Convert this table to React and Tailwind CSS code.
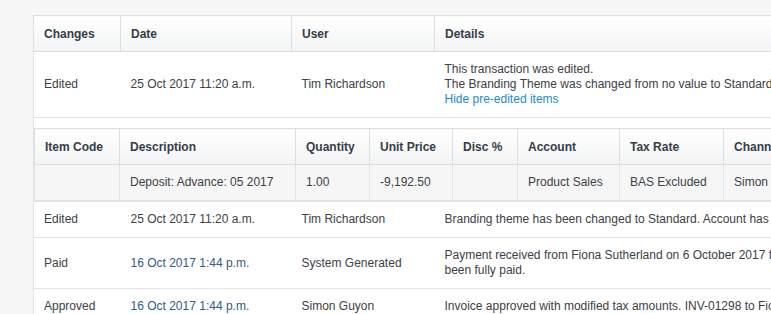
import React from "react";

const th =
  "border border-[#dedede] px-[10px] pt-[11px] pb-[9px] text-left font-bold text-[#343e48] leading-[15px] bg-gradient-to-b from-white to-[#f3f4f5]";
const td = "border border-[#e2e2e2] px-[10px] py-[10px] leading-[15px] align-middle";
const itd = "border border-[#e4e4e4] px-[10px] py-[10px] leading-[15px] align-middle bg-[#f6f6f6]";

export default function App() {
  return (
    <div className="w-[771px] h-[314px] overflow-hidden bg-[#f6f6f6] pl-[33px] pt-[15px] font-['Liberation_Sans',Arial,sans-serif] text-[12px] text-[#3b4147]">
      <table className="table-fixed border-collapse bg-white w-[1150px] border border-[#dcdcdc]">
        <colgroup>
          <col className="w-[87px]" />
          <col className="w-[171px]" />
          <col className="w-[143px]" />
          <col />
        </colgroup>
        <thead>
          <tr>
            <th className={th}>Changes</th>
            <th className={th}>Date</th>
            <th className={th}>User</th>
            <th className={th}>Details</th>
          </tr>
        </thead>
        <tbody>
          <tr>
            <td className={td + " border-r-0"}>Edited</td>
            <td className={td + " border-x-0"}>25 Oct 2017 11:20 a.m.</td>
            <td className={td + " border-x-0"}>Tim Richardson</td>
            <td className={td + " border-l-0 whitespace-nowrap"}>
              <div>This transaction was edited.</div>
              <div>The Branding Theme was changed from no value to Standard.</div>
              <div>
                <a className="text-[#1a8dd0]">Hide pre-edited items</a>
              </div>
            </td>
          </tr>
          <tr>
            <td colSpan={4} className="border border-[#e2e2e2] p-0 pt-[10px]">
              <table className="table-fixed border-collapse w-[1100px] border border-[#dadada]">
                <colgroup>
                  <col className="w-[85px]" />
                  <col className="w-[176px]" />
                  <col className="w-[74px]" />
                  <col className="w-[83px]" />
                  <col className="w-[65px]" />
                  <col className="w-[102px]" />
                  <col className="w-[104px]" />
                  <col className="w-[110px]" />
                  <col />
                </colgroup>
                <thead>
                  <tr>
                    <th className={th}>Item Code</th>
                    <th className={th}>Description</th>
                    <th className={th}>Quantity</th>
                    <th className={th}>Unit Price</th>
                    <th className={th}>Disc %</th>
                    <th className={th}>Account</th>
                    <th className={th}>Tax Rate</th>
                    <th className={th}>Channel</th>
                    <th className={th}>Amount AUD</th>
                  </tr>
                </thead>
                <tbody>
                  <tr>
                    <td className={itd}></td>
                    <td className={itd}>Deposit: Advance: 05 2017</td>
                    <td className={itd}>1.00</td>
                    <td className={itd}>-9,192.50</td>
                    <td className={itd}></td>
                    <td className={itd}>Product Sales</td>
                    <td className={itd}>BAS Excluded</td>
                    <td className={itd}>Simon</td>
                    <td className={itd}>-9,192.50</td>
                  </tr>
                </tbody>
              </table>
            </td>
          </tr>
          <tr>
            <td className={td + " border-r-0"}>Edited</td>
            <td className={td + " border-x-0"}>25 Oct 2017 11:20 a.m.</td>
            <td className={td + " border-x-0"}>Tim Richardson</td>
            <td className={td + " border-l-0 whitespace-nowrap"}>
              Branding theme has been changed to Standard. Account has been changed.
            </td>
          </tr>
          <tr>
            <td className={td + " border-r-0"}>Paid</td>
            <td className={td + " border-x-0 text-[#355a85]"}>16 Oct 2017 1:44 p.m.</td>
            <td className={td + " border-x-0"}>System Generated</td>
            <td className={td + " border-l-0 whitespace-nowrap"}>
              <div>Payment received from Fiona Sutherland on 6 October 2017 for 9,192.50. This invoice has</div>
              <div>been fully paid.</div>
            </td>
          </tr>
          <tr>
            <td className={td + " border-r-0"}>Approved</td>
            <td className={td + " border-x-0 text-[#355a85]"}>16 Oct 2017 1:44 p.m.</td>
            <td className={td + " border-x-0"}>Simon Guyon</td>
            <td className={td + " border-l-0 whitespace-nowrap"}>
              Invoice approved with modified tax amounts. INV-01298 to Fiona Sutherland for 9,192.50.
            </td>
          </tr>
        </tbody>
      </table>
    </div>
  );
}
